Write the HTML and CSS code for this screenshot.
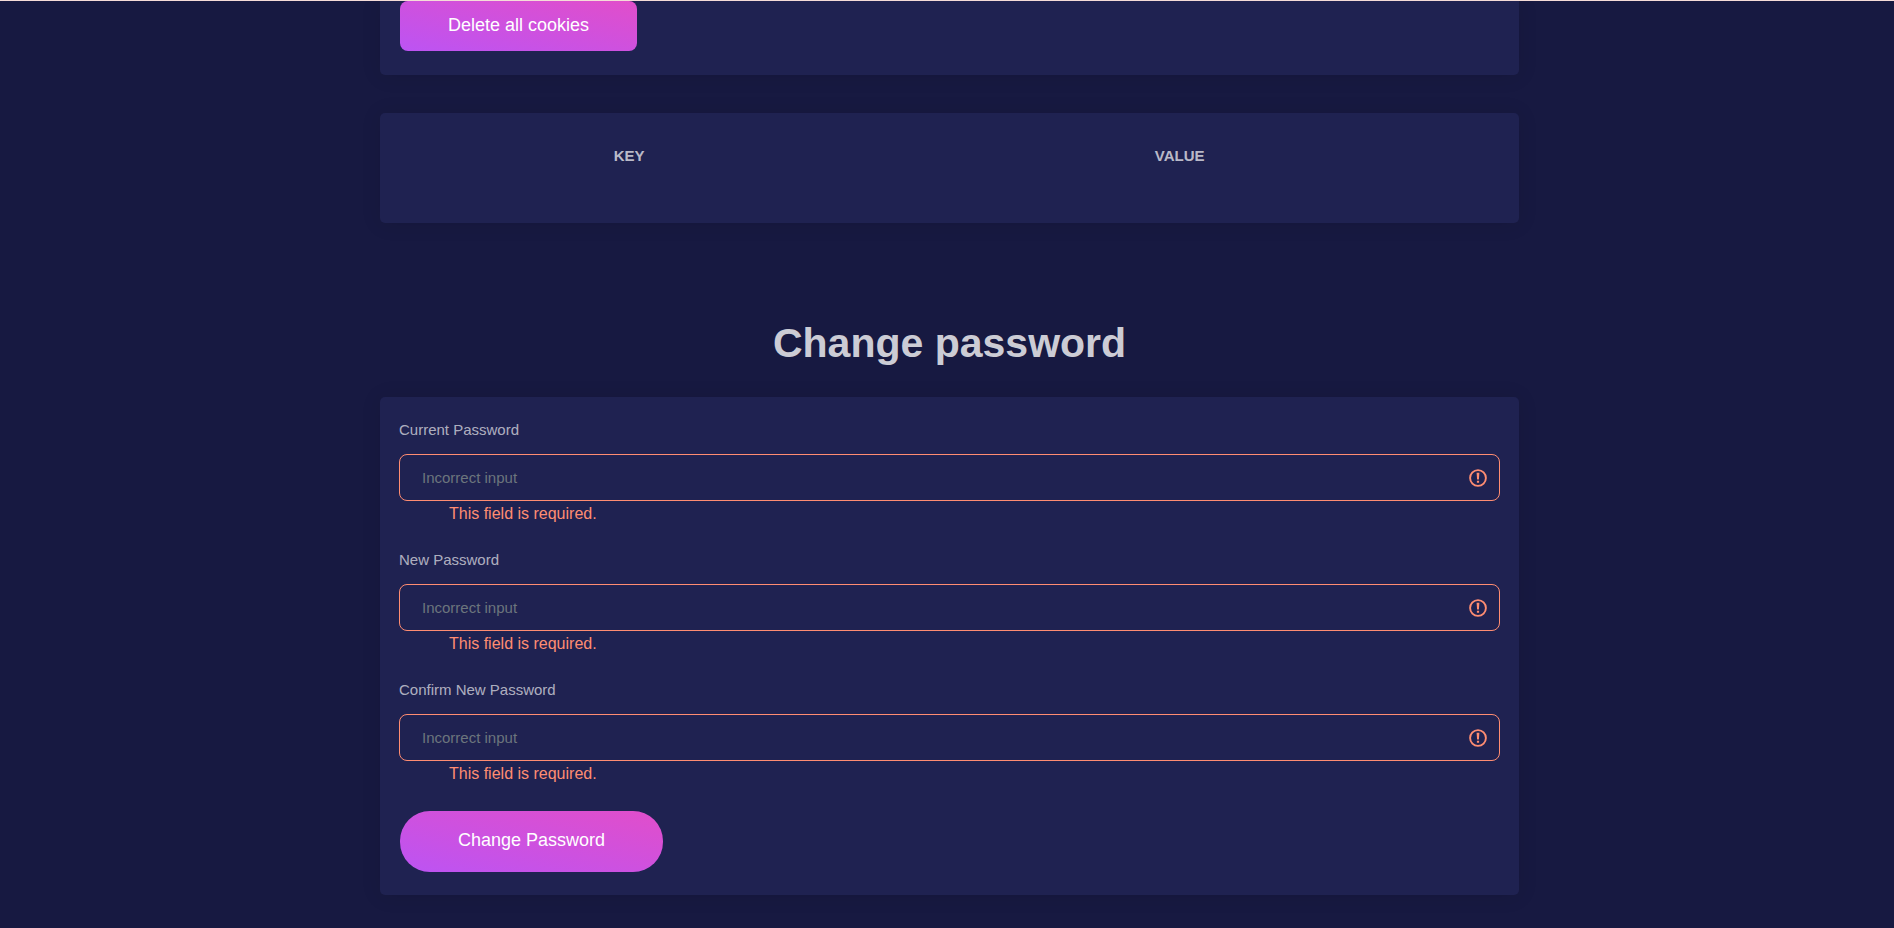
FILE: index.html
```html
<!DOCTYPE html>
<html lang="en">
<head>
<meta charset="utf-8">
<meta name="viewport" content="width=device-width, initial-scale=1">
<title>Change password</title>
<link rel="stylesheet" href="styles.css">
</head>
<body>
<svg class="sprite" aria-hidden="true">
  <symbol id="alert" viewBox="0 0 18 18">
    <circle cx="9" cy="9" r="7.9" fill="none" stroke="currentColor" stroke-width="1.9"/>
    <path d="M7.6 3.8h2.8l-.5 6.6H8.1zM7.9 11.8h2.2v2H7.9z" fill="currentColor"/>
  </symbol>
</svg>
<main class="page">
  <section class="card card-cookies">
    <button type="button" class="btn btn-cookies">Delete all cookies</button>
  </section>

  <section class="card card-table">
    <table class="table">
      <thead>
        <tr><th class="col-key" scope="col">KEY</th><th scope="col">VALUE</th></tr>
      </thead>
    </table>
  </section>

  <h1 class="title">Change password</h1>

  <form class="card card-form">
    <div class="field">
      <label class="label" for="current">Current Password</label>
      <div class="control">
        <input class="input" id="current" type="password" placeholder="Incorrect input" aria-describedby="current-error">
        <svg class="icon" aria-hidden="true"><use href="#alert"/></svg>
      </div>
      <p class="error" id="current-error">This field is required.</p>
    </div>
    <div class="field">
      <label class="label" for="new">New Password</label>
      <div class="control">
        <input class="input" id="new" type="password" placeholder="Incorrect input" aria-describedby="new-error">
        <svg class="icon" aria-hidden="true"><use href="#alert"/></svg>
      </div>
      <p class="error" id="new-error">This field is required.</p>
    </div>
    <div class="field">
      <label class="label" for="confirm">Confirm New Password</label>
      <div class="control">
        <input class="input" id="confirm" type="password" placeholder="Incorrect input" aria-describedby="confirm-error">
        <svg class="icon" aria-hidden="true"><use href="#alert"/></svg>
      </div>
      <p class="error" id="confirm-error">This field is required.</p>
    </div>
    <button type="button" class="btn btn-submit">Change Password</button>
  </form>
</main>
</body>
</html>
```
FILE: styles.css
```css
* {
  box-sizing: border-box;
}

body {
  margin: 0;
  border-top: 1px solid #f5dcd8;
  background: #171941;
  color: rgba(255, 255, 255, 0.8);
  font-family: "Liberation Sans", Arial, sans-serif;
  font-size: 15px;
}

.sprite {
  display: none;
}

.page {
  max-width: 1144px;
  margin: 0 auto;
  padding: 0 0 32px 5px;
}

.card {
  border-radius: 5px;
  background: #1f2251;
  box-shadow: 0 1px 20px rgba(0, 0, 0, 0.1);
}

.card-cookies {
  padding: 0 20px 24px;
  border-radius: 0 0 5px 5px;
}

.card-table {
  margin-top: 38px;
  padding: 23px 20px 47px 18px;
}

.table {
  width: 100%;
  border-collapse: collapse;
}

.table th {
  padding: 8px;
  line-height: 24px;
  text-align: center;
  color: rgba(255, 255, 255, 0.7);
}

.col-key {
  width: 42%;
}

.title {
  margin: 95px 0 29px;
  color: rgba(255, 255, 255, 0.8);
  font-size: 41px;
  line-height: 50px;
  text-align: center;
}

.card-form {
  padding: 22px 19px 23px;
}

.field {
  margin-bottom: 22px;
}

.label {
  display: block;
  margin-bottom: 13px;
  color: rgba(255, 255, 255, 0.65);
  line-height: 22px;
}

.control {
  display: grid;
  align-items: center;
}

.input,
.icon {
  grid-area: 1 / 1;
}

.input {
  width: 100%;
  height: 47px;
  padding: 0 40px 0 22px;
  border: 1px solid #ff8d72;
  border-radius: 8px;
  background: transparent;
  color: rgba(255, 255, 255, 0.8);
  font: inherit;
}

.input::placeholder {
  color: #6c757d;
  opacity: 1;
}

.icon {
  justify-self: end;
  width: 18px;
  height: 18px;
  margin-right: 13px;
  color: #ff8d72;
  pointer-events: none;
}

.error {
  margin: 0;
  padding-left: 50px;
  color: #ff8d72;
  font-size: 16px;
  line-height: 26px;
}

.btn {
  display: block;
  border: 0;
  background: linear-gradient(to bottom left, #e14eca, #ba54f5, #e14eca) top right / 210% 210%;
  color: #fff;
  font-family: inherit;
  font-size: 18px;
  line-height: 24px;
  cursor: pointer;
}

.btn-cookies {
  padding: 12px 48px 14px;
  border-radius: 8px;
}

.btn-submit {
  margin: 24px 0 0 1px;
  padding: 17px 58px 20px;
  border-radius: 30px;
}
```
